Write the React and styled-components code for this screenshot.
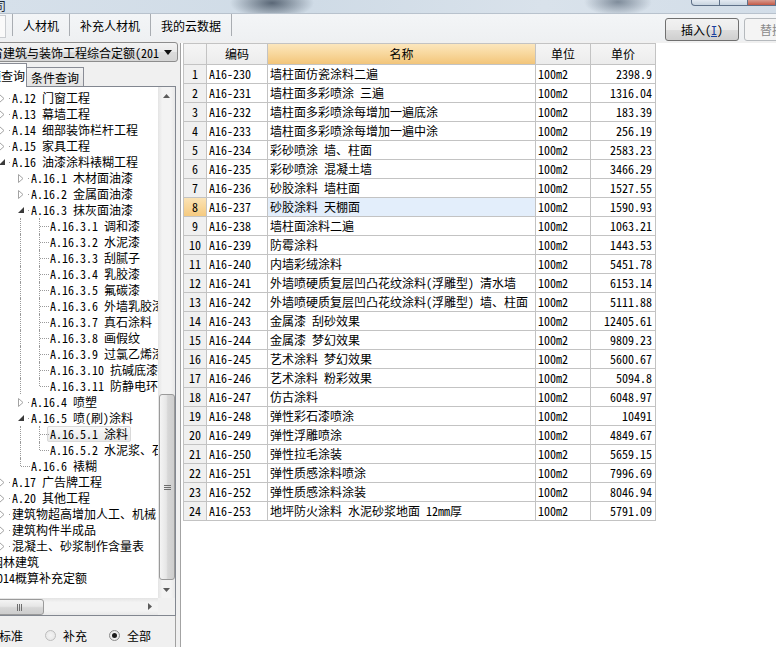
import React from "react";
import styled, { createGlobalStyle, css } from "styled-components";

const GlobalStyle = createGlobalStyle`
  html, body { margin: 0; padding: 0; }
  body {
    font-family: "Noto Sans Mono CJK SC", "Liberation Mono", "Noto Sans CJK SC", monospace;
    font-size: 12px;
    color: #000;
    overflow: hidden;
  }
`;

const treeItems = [
  { level: 1, kind: "closed", text: "A.12 门窗工程" },
  { level: 1, kind: "closed", text: "A.13 幕墙工程" },
  { level: 1, kind: "closed", text: "A.14 细部装饰栏杆工程" },
  { level: 1, kind: "closed", text: "A.15 家具工程" },
  { level: 1, kind: "open", text: "A.16 油漆涂料裱糊工程" },
  { level: 2, kind: "closed", text: "A.16.1 木材面油漆" },
  { level: 2, kind: "closed", text: "A.16.2 金属面油漆" },
  { level: 2, kind: "open", text: "A.16.3 抹灰面油漆" },
  { level: 3, kind: "leaf", text: "A.16.3.1 调和漆", guide: true },
  { level: 3, kind: "leaf", text: "A.16.3.2 水泥漆", guide: true },
  { level: 3, kind: "leaf", text: "A.16.3.3 刮腻子", guide: true },
  { level: 3, kind: "leaf", text: "A.16.3.4 乳胶漆", guide: true },
  { level: 3, kind: "leaf", text: "A.16.3.5 氟碳漆", guide: true },
  { level: 3, kind: "leaf", text: "A.16.3.6 外墙乳胶漆", guide: true },
  { level: 3, kind: "leaf", text: "A.16.3.7 真石涂料", guide: true },
  { level: 3, kind: "leaf", text: "A.16.3.8 画假纹", guide: true },
  { level: 3, kind: "leaf", text: "A.16.3.9 过氯乙烯漆", guide: true },
  { level: 3, kind: "leaf", text: "A.16.3.10 抗碱底漆", guide: true },
  { level: 3, kind: "last", text: "A.16.3.11 防静电环氧涂料", guide: true },
  { level: 2, kind: "closed", text: "A.16.4 喷塑" },
  { level: 2, kind: "open", text: "A.16.5 喷(刷)涂料" },
  { level: 3, kind: "leaf", text: "A.16.5.1 涂料", guide: true, selected: true },
  { level: 3, kind: "last", text: "A.16.5.2 水泥浆、石灰浆", guide: true },
  { level: 2, kind: "last", text: "A.16.6 裱糊" },
  { level: 1, kind: "closed", text: "A.17 广告牌工程" },
  { level: 1, kind: "closed", text: "A.20 其他工程" },
  { level: 1, kind: "closed", text: "建筑物超高增加人工、机械" },
  { level: 1, kind: "closed", text: "建筑构件半成品" },
  { level: 1, kind: "closed", text: "混凝土、砂浆制作含量表" },
  { level: 0, kind: "closed", text: "园林建筑" },
  { level: 0, kind: "closed", text: "2014概算补充定额" },
];

const rows = [
  ["A16-230", "墙柱面仿瓷涂料二遍", "2398.9"],
  ["A16-231", "墙柱面多彩喷涂 三遍", "1316.04"],
  ["A16-232", "墙柱面多彩喷涂每增加一遍底涂", "183.39"],
  ["A16-233", "墙柱面多彩喷涂每增加一遍中涂", "256.19"],
  ["A16-234", "彩砂喷涂 墙、柱面", "2583.23"],
  ["A16-235", "彩砂喷涂 混凝土墙", "3466.29"],
  ["A16-236", "砂胶涂料 墙柱面", "1527.55"],
  ["A16-237", "砂胶涂料 天棚面", "1590.93"],
  ["A16-238", "墙柱面涂料二遍", "1063.21"],
  ["A16-239", "防霉涂料", "1443.53"],
  ["A16-240", "内墙彩绒涂料", "5451.78"],
  ["A16-241", "外墙喷硬质复层凹凸花纹涂料(浮雕型) 清水墙", "6153.14"],
  ["A16-242", "外墙喷硬质复层凹凸花纹涂料(浮雕型) 墙、柱面", "5111.88"],
  ["A16-243", "金属漆 刮砂效果", "12405.61"],
  ["A16-244", "金属漆 梦幻效果", "9809.23"],
  ["A16-245", "艺术涂料 梦幻效果", "5600.67"],
  ["A16-246", "艺术涂料 粉彩效果", "5094.8"],
  ["A16-247", "仿古涂料", "6048.97"],
  ["A16-248", "弹性彩石漆喷涂", "10491"],
  ["A16-249", "弹性浮雕喷涂", "4849.67"],
  ["A16-250", "弹性拉毛涂装", "5659.15"],
  ["A16-251", "弹性质感涂料喷涂", "7996.69"],
  ["A16-252", "弹性质感涂料涂装", "8046.94"],
  ["A16-253", "地坪防火涂料 水泥砂浆地面 12mm厚", "5791.09"],
];

const SELECTED_ROW = 8;

const Window = styled.div`
  width: 776px;
  height: 647px;
  display: flex;
  flex-direction: column;
  background: #f0f0f0;
  overflow: hidden;
`;

/* blurred title bar of the window behind */
const TitleStrip = styled.div`
  flex: none;
  height: 13px;
  display: flex;
  align-items: flex-start;
  overflow: hidden;
  background:
    radial-gradient(ellipse 42px 16px at 272px 3px, rgba(60, 74, 90, 0.8), rgba(60, 74, 90, 0)),
    radial-gradient(ellipse 34px 14px at 618px 2px, rgba(80, 95, 112, 0.65), rgba(80, 95, 112, 0)),
    linear-gradient(to right, #d6e0ea, #cfdbe6 40%, #d9e2eb 70%, #d2dde8);
`;
const TitleText = styled.span`
  margin-left: -6px;
  margin-top: -3px;
  font-family: "Noto Sans CJK SC", sans-serif;
  font-size: 12px;
  color: #1e2a36;
`;
const WinControls = styled.div`
  margin-left: auto;
  display: flex;
`;
const WinButton = styled.div`
  width: 27px;
  height: 5px;
  border: 1px solid #5f7189;
  border-top: none;
  border-left: ${(p) => (p.$first ? "1px solid #5f7189" : "none")};
  border-radius: ${(p) => (p.$first ? "0 0 0 4px" : "0")};
  background: ${(p) => (p.$close ? "linear-gradient(#d79b8f, #c45a48)" : "linear-gradient(#e3eaf2, #c8d4e0)")};
`;

const Toolbar = styled.div`
  flex: none;
  height: 27px;
  display: flex;
  align-items: flex-start;
  border-top: 1px solid #b8c2cd;
  background: linear-gradient(#f3f5f7, #eef0f2);
`;
const SearchStub = styled.div`
  flex: none;
  width: 5px;
  height: 21px;
  margin-top: 1px;
  background: #fafafa;
  border: 1px solid #c9ccd0;
  border-left: none;
`;
const ToolTab = styled.div`
  flex: none;
  height: 22px;
  display: flex;
  align-items: center;
  white-space: nowrap;
  padding: ${(p) => (p.$end ? "0" : "0 10px")};
  border-left: 1px solid #a9adb2;
  font-family: "Noto Sans CJK SC", sans-serif;
  font-size: 12px;
  margin-left: ${(p) => p.$gap || 0}px;
`;
const ToolButton = styled.div`
  height: 21px;
  margin-top: 4px;
  display: flex;
  align-items: center;
  justify-content: center;
  white-space: nowrap;
  width: ${(p) => p.$w}px;
  margin-left: ${(p) => p.$ml || 0}px;
  border: 1px solid ${(p) => (p.$disabled ? "#b5b9bd" : "#707070")};
  border-radius: 3px;
  background: ${(p) =>
    p.$disabled
      ? "#f4f4f4"
      : "linear-gradient(#f2f2f2 0%, #ebebeb 50%, #dddddd 51%, #cfcfcf 100%)"};
  color: ${(p) => (p.$disabled ? "#8a8a8a" : "#000")};
  font-family: "Noto Sans Mono CJK SC", "Noto Sans CJK SC", sans-serif;
  font-size: 12px;
  flex: none;
  u {
    color: ${(p) => (p.$disabled ? "inherit" : "#1a3f9c")};
  }
`;

const Main = styled.div`
  flex: 1;
  min-height: 0;
  display: flex;
`;

const LeftPanel = styled.div`
  flex: none;
  width: 179px;
  display: flex;
  flex-direction: column;
  overflow: hidden;
  padding-top: 1px;
`;
const Dropdown = styled.div`
  flex: none;
  height: 18px;
  margin-left: -13px;
  margin-right: 1px;
  display: flex;
  align-items: center;
  border: 1px solid #8d8d8d;
  border-radius: 3px;
  background: linear-gradient(#f3f3f3, #e9e9e9 50%, #dcdcdc 51%, #d5d5d5);
`;
const DropdownLabel = styled.div`
  flex: 1;
  min-width: 0;
  padding-left: 3px;
  white-space: nowrap;
  overflow: hidden;
`;
const DropdownArrow = styled.div`
  flex: none;
  width: 18px;
  display: flex;
  justify-content: center;
`;

const TabsRow = styled.div`
  flex: none;
  height: 24px;
  margin-left: -26px;
  display: flex;
  align-items: flex-end;
`;
const Tab = styled.div`
  position: relative;
  display: flex;
  align-items: center;
  white-space: nowrap;
  font-family: "Noto Sans CJK SC", sans-serif;
  border: 1px solid #898c95;
  border-bottom: none;
  ${(p) =>
    p.$active
      ? css`
          z-index: 1;
          height: 23px;
          margin-bottom: -1px;
          padding: 0 1px 0 2px;
          background: #fff;
        `
      : css`
          height: 18px;
          padding: 0 4px;
          border-left: none;
          background: linear-gradient(#f2f2f2, #e3e3e3);
        `}
`;

const TreeBox = styled.div`
  flex: 1;
  min-height: 0;
  margin-left: -28px;
  margin-right: 3px;
  border: 1px solid #828790;
  background: #fff;
  display: grid;
  grid-template-columns: 1fr 17px;
  grid-template-rows: 1fr 17px;
`;
const TreeView = styled.div`
  grid-column: 1;
  grid-row: 1;
  overflow: hidden;
  padding-top: 3px;
`;
const TreeRow = styled.div`
  height: 16px;
  display: flex;
  align-items: center;
  white-space: nowrap;
  margin-left: ${(p) => (p.$root ? "-2px" : "0")};
`;
const Cell = styled.div`
  position: relative;
  flex: none;
  width: 19px;
  height: 16px;
  display: flex;
  align-items: center;
  justify-content: center;
`;
const dotLine = "#9a9a9a";
const GuideCell = styled(Cell)`
  ${(p) =>
    p.$on &&
    css`
      &::before {
        content: "";
        position: absolute;
        left: 9px;
        top: 0;
        bottom: 0;
        border-left: 1px dotted ${dotLine};
      }
    `}
`;
const BranchCell = styled(Cell)`
  &::before {
    content: "";
    position: absolute;
    left: 9px;
    top: 0;
    height: ${(p) => (p.$last ? "8px" : "16px")};
    border-left: 1px dotted ${dotLine};
  }
  &::after {
    content: "";
    position: absolute;
    left: 10px;
    right: 0;
    top: 8px;
    border-top: 1px dotted ${dotLine};
  }
`;
const ExpanderCell = styled(Cell)`
  &::after {
    content: "";
    position: absolute;
    left: 17px;
    top: 8px;
    width: 1px;
    height: 1px;
    background: ${dotLine};
  }
`;
const TreeLabel = styled.span`
  margin-left: -2px;
  height: 14px;
  line-height: 14px;
  padding: 0 2px;
  border: 1px solid transparent;
  border-radius: 2px;
  ${(p) =>
    p.$selected &&
    css`
      border-color: #d9d9d9;
      background: linear-gradient(#fafafa, #e9e9e9);
    `}
`;

const VScroll = styled.div`
  grid-column: 2;
  grid-row: 1;
  display: flex;
  flex-direction: column;
  background: linear-gradient(to right, #e4e4e4, #f3f3f3 25%, #f3f3f3 75%, #e8e8e8);
`;
const HScroll = styled.div`
  grid-column: 1;
  grid-row: 2;
  display: flex;
  background: linear-gradient(#e4e4e4, #f3f3f3 25%, #f3f3f3 75%, #e8e8e8);
`;
const ScrollCorner = styled.div`
  grid-column: 2;
  grid-row: 2;
  background: #f0f0f0;
`;
const ScrollArrow = styled.div`
  flex: none;
  width: 17px;
  height: 17px;
  display: flex;
  align-items: center;
  justify-content: center;
`;
const ScrollSpace = styled.div`
  flex: 1;
`;
const VThumb = styled.div`
  flex: none;
  height: 184px;
  margin: 0 0 1px 1px;
  width: 14px;
  border: 1px solid #9a9a9a;
  border-radius: 3px;
  background: linear-gradient(to right, #f4f4f4, #e6e6e6 45%, #d7d7d7 55%, #cdcdcd);
  display: flex;
  align-items: center;
  justify-content: center;
`;
const HThumb = styled.div`
  flex: none;
  width: 48px;
  height: 14px;
  margin: 1px 0 0 4px;
  border: 1px solid #9a9a9a;
  border-radius: 3px;
  background: linear-gradient(#f4f4f4, #e6e6e6 45%, #d7d7d7 55%, #cdcdcd);
  display: flex;
  align-items: center;
  justify-content: center;
`;

const RadioRow = styled.div`
  flex: none;
  height: 23px;
  padding-top: 8px;
  margin-left: -19px;
  margin-right: 3px;
  border-right: 1px solid #a0a0a0;
  display: flex;
  align-items: center;
  gap: 22px;
  font-family: "Noto Sans CJK SC", sans-serif;
`;
const RadioItem = styled.label`
  display: flex;
  align-items: center;
  gap: 7px;
  white-space: nowrap;
`;
const RadioDot = styled.span`
  width: 9px;
  height: 9px;
  border-radius: 50%;
  border: 1px solid ${(p) => (p.$checked ? "#8a8a8a" : "#bdbdbd")};
  background: radial-gradient(circle, #f4f4f4, #e4e4e4);
  display: flex;
  align-items: center;
  justify-content: center;
  &::after {
    content: "";
    width: 5px;
    height: 5px;
    border-radius: 50%;
    background: ${(p) => (p.$checked ? "#1a1a1a" : "transparent")};
  }
`;

const Splitter = styled.div`
  flex: none;
  width: 1px;
`;
const RightPanel = styled.div`
  flex: 1;
  margin-top: 2px;
  background: #fff;
  border-left: 1px solid #a3a3a3;
  padding-left: 2px;
  overflow: hidden;
`;
const Grid = styled.div`
  display: grid;
  grid-template-columns: 23px 61px 268px 55px 65px;
  grid-auto-rows: 19px;
  grid-template-rows: 21px;
  width: max-content;
  border-left: 1px solid #c3c3c3;
  border-top: 1px solid #c3c3c3;
`;
const HeadCell = styled.div`
  border-right: 1px solid #c3c3c3;
  border-bottom: 1px solid #c3c3c3;
  display: flex;
  align-items: center;
  justify-content: center;
  line-height: 20px;
  overflow: hidden;
  font-family: "Noto Sans CJK SC", sans-serif;
  font-size: 12px;
  background: ${(p) =>
    p.$accent ? "linear-gradient(#fce6bd, #f8d79c 50%, #f2c57a)" : "linear-gradient(#f5f5f5, #ececec)"};
`;
const BodyCell = styled.div`
  border-right: 1px solid #c3c3c3;
  border-bottom: 1px solid #c3c3c3;
  display: flex;
  align-items: center;
  line-height: 18px;
  white-space: nowrap;
  overflow: hidden;
  padding: 0 3px 0 2px;
  justify-content: ${(p) => (p.$align === "right" ? "flex-end" : p.$align === "center" ? "center" : "flex-start")};
  ${(p) =>
    p.$index &&
    css`
      padding: 0;
      background: ${p.$active ? "linear-gradient(#fbe3b5, #f5ca80)" : "#f0f0f0"};
    `}
  ${(p) =>
    p.$active &&
    !p.$index &&
    css`
      background: #e3eefb;
    `}
`;

const Expander = ({ open }) =>
  open ? (
    <svg width="6" height="6" viewBox="0 0 6 6">
      <path d="M6 0 L6 6 L0 6 Z" fill="#3a3a3a" />
    </svg>
  ) : (
    <svg width="6" height="9" viewBox="0 0 6 9">
      <path d="M0.5 0.5 L5 4.5 L0.5 8.5 Z" fill="#fff" stroke="#a3a3a3" />
    </svg>
  );

const Tri = ({ dir }) => {
  const d = {
    up: "M0 4 L3.5 0 L7 4 Z",
    down: "M0 0 L7 0 L3.5 4 Z",
    right: "M0 0 L4 3.5 L0 7 Z",
  }[dir];
  const w = dir === "right" ? 4 : 7;
  const h = dir === "right" ? 7 : 4;
  return (
    <svg width={w} height={h} viewBox={`0 0 ${w} ${h}`}>
      <path d={d} fill="#5b5b5b" />
    </svg>
  );
};

const Grip = ({ vertical }) =>
  vertical ? (
    <svg width="7" height="7" viewBox="0 0 7 7">
      <path d="M0 1.5h7M0 3.5h7M0 5.5h7" stroke="#6e6e6e" strokeWidth="1" />
    </svg>
  ) : (
    <svg width="7" height="7" viewBox="0 0 7 7">
      <path d="M1.5 0v7M3.5 0v7M5.5 0v7" stroke="#6e6e6e" strokeWidth="1" />
    </svg>
  );

const TreeItem = ({ item }) => {
  const { level, kind, text, guide, selected } = item;
  const guides = [];
  for (let i = 0; i < level; i++) {
    guides.push(<GuideCell key={i} $on={guide && i === 2} />);
  }
  return (
    <TreeRow $root={level === 0}>
      {guides}
      {kind === "leaf" || kind === "last" ? (
        <BranchCell $last={kind === "last"} />
      ) : (
        <ExpanderCell>
          <Expander open={kind === "open"} />
        </ExpanderCell>
      )}
      <TreeLabel $selected={selected}>{text}</TreeLabel>
    </TreeRow>
  );
};

export default function App() {
  return (
    <>
      <GlobalStyle />
      <Window>
        <TitleStrip>
          <TitleText>司</TitleText>
          <WinControls>
            <WinButton $first />
            <WinButton />
            <WinButton $close />
          </WinControls>
        </TitleStrip>

        <Toolbar>
          <SearchStub />
          <ToolTab $gap={6}>人材机</ToolTab>
          <ToolTab>补充人材机</ToolTab>
          <ToolTab>我的云数据</ToolTab>
          <ToolTab $end />
          <ToolButton $w={72} $ml={433}>
            插入(<u>I</u>)
          </ToolButton>
          <ToolButton $w={72} $ml={5} $disabled>
            替换(<u>R</u>)
          </ToolButton>
        </Toolbar>

        <Main>
          <LeftPanel>
            <Dropdown>
              <DropdownLabel>省建筑与装饰工程综合定额(2010)</DropdownLabel>
              <DropdownArrow>
                <svg width="8" height="5" viewBox="0 0 8 5">
                  <path d="M0 0 L8 0 L4 5 Z" fill="#111" />
                </svg>
              </DropdownArrow>
            </Dropdown>

            <TabsRow>
              <Tab $active>定额查询</Tab>
              <Tab>条件查询</Tab>
            </TabsRow>

            <TreeBox>
              <TreeView>
                {treeItems.map((item, i) => (
                  <TreeItem key={i} item={item} />
                ))}
              </TreeView>
              <VScroll>
                <ScrollArrow>
                  <Tri dir="up" />
                </ScrollArrow>
                <ScrollSpace />
                <VThumb>
                  <Grip vertical />
                </VThumb>
                <ScrollArrow>
                  <Tri dir="down" />
                </ScrollArrow>
              </VScroll>
              <HScroll>
                <ScrollArrow />
                <HThumb>
                  <Grip />
                </HThumb>
                <ScrollSpace />
                <ScrollArrow>
                  <Tri dir="right" />
                </ScrollArrow>
              </HScroll>
              <ScrollCorner />
            </TreeBox>

            <RadioRow>
              <RadioItem>
                <RadioDot />
                标准
              </RadioItem>
              <RadioItem>
                <RadioDot />
                补充
              </RadioItem>
              <RadioItem>
                <RadioDot $checked />
                全部
              </RadioItem>
            </RadioRow>
          </LeftPanel>

          <Splitter />

          <RightPanel>
            <Grid>
              <HeadCell />
              <HeadCell>编码</HeadCell>
              <HeadCell $accent>名称</HeadCell>
              <HeadCell>单位</HeadCell>
              <HeadCell>单价</HeadCell>
              {rows.map(([code, name, price], i) => {
                const n = i + 1;
                const active = n === SELECTED_ROW;
                return (
                  <React.Fragment key={code}>
                    <BodyCell $index $active={active} $align="center">
                      {n}
                    </BodyCell>
                    <BodyCell>{code}</BodyCell>
                    <BodyCell $active={active}>{name}</BodyCell>
                    <BodyCell>100m2</BodyCell>
                    <BodyCell $align="right">{price}</BodyCell>
                  </React.Fragment>
                );
              })}
            </Grid>
          </RightPanel>
        </Main>
      </Window>
    </>
  );
}
